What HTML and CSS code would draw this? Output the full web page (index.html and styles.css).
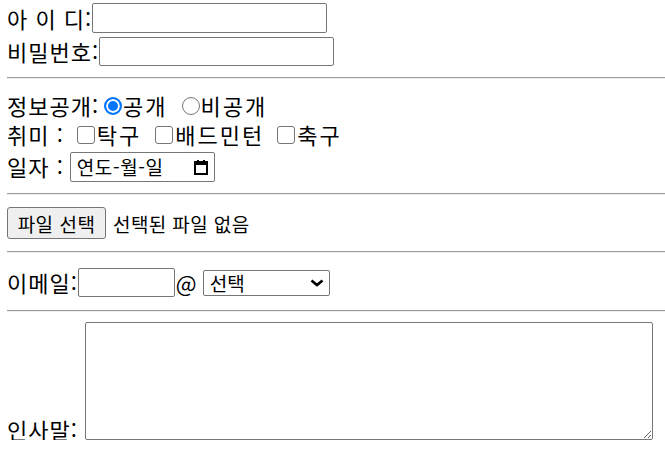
FILE: index.html
```html
<!DOCTYPE html>
<html lang="ko">
<head>
    <meta charset="UTF-8">
    <title>회원가입 폼</title>
    <link rel="stylesheet" href="styles.css">
</head>
<body>
    <!-- 회원정보 입력 폼 -->
    <form class="join">
        <div class="row r1">아 이 디:<input type="text" class="txt"></div>
        <div class="row r2">비밀번호:<input type="password" class="txt"></div>
        <hr class="h1">
        <div class="row chk rad">정보공개:<label><input type="radio" name="open" checked>공개</label><label><input type="radio" name="open">비공개</label></div>
        <div class="row chk box">취미 :<label><input type="checkbox">탁구</label><label><input type="checkbox">배드민턴</label><label class="last"><input type="checkbox">축구</label></div>
        <div class="row r3">일자 :
            <!-- 날짜 입력 (한글 표기) -->
            <span class="date">연도-월-일
                <svg class="cal" width="16" height="16" viewBox="0 0 16 16"><rect x="2" y="3" width="12" height="12" fill="none" stroke="#000" stroke-width="2"/><rect x="2" y="3" width="12" height="3" fill="#000"/><rect x="4" y="1" width="2" height="3" fill="#000"/><rect x="10" y="1" width="2" height="3" fill="#000"/></svg>
            </span>
        </div>
        <hr class="h2">
        <div class="row r4"><button type="button" class="file">파일 선택</button><span class="none">선택된 파일 없음</span></div>
        <hr class="h3">
        <div class="row r5">이메일:<input type="text" class="mail">@
            <span class="selbox">
                <select class="sel"><option>선택</option><option>naver.com</option><option>daum.net</option></select>
                <svg class="arr" width="14" height="8" viewBox="0 0 14 8"><path d="M1.5 1.5 L7 6 L12.5 1.5" fill="none" stroke="#000" stroke-width="2.6"/></svg>
            </span>
        </div>
        <hr class="h4">
        <div class="row msg"><span class="lb">인사말:</span><textarea class="area"></textarea></div>
    </form>
</body>
</html>
```

FILE: styles.css
```css
body{
    margin: 0;
    padding: 3px 0 0 7px;
    font-family: "Noto Sans CJK KR", "Noto Sans", sans-serif;
    font-size: 22px;
    letter-spacing: 1px;
    color: #000;
    overflow: hidden;
}
.row{
    display: flex;
    align-items: center;
    white-space: nowrap;
    line-height: 29px;
}
.r1{ height: 30px; }
.r2{ height: 30px; margin-top: 3px; }
.chk{ height: 29px; }
.r3{ height: 29px; margin-top: 3px; }
.r4{ height: 32px; margin-top: 12px; }
.r5{ height: 29px; margin-top: 15px; }
.msg{ height: 117px; margin-top: 11px; align-items: flex-end; }

hr{
    margin: 0;
    border: 0;
    border-top: 1px solid #9a9a9a;
    border-bottom: 1px solid #eee;
}
.h1{ margin-top: 11px; margin-bottom: 12px; }
.h2{ margin-top: 12px; }
.h3{ margin-top: 12px; }
.h4{ margin-top: 13px; }

input, select, textarea, button{
    font-family: "Noto Sans CJK KR", sans-serif;
    letter-spacing: 0;
}
.txt, .mail{
    box-sizing: border-box;
    height: 30px;
    border: 1px solid #767676;
    border-radius: 2px;
    margin: 0;
}
.txt{ width: 235px; }
.r2 .txt{ height: 29px; }
.mail{ width: 97px; height: 29px; margin-right: 1px; }

/* 라디오 / 체크박스 - 직접 그림 */
label{
    display: flex;
    align-items: center;
    letter-spacing: 2px;
}
input[type=radio], input[type=checkbox]{
    -webkit-appearance: none;
    appearance: none;
    box-sizing: border-box;
    flex: none;
    width: 18px;
    height: 18px;
    margin: 0 1px 0 5px;
    border: 1px solid #767676;
    background: #fff;
}
input[type=radio]{ border-radius: 50%; }
input[type=radio]:checked{
    border: 2px solid #0075ff;
    background: #0075ff;
    box-shadow: inset 0 0 0 2px #fff;
}
input[type=checkbox]{
    border-radius: 3px;
}
.rad label + label input{ margin-left: 14px; }
.box input{ margin: 0 2px 0 13px; }
.box label + label input{ margin-left: 14px; }
.box .last input{ margin-left: 13px; }

.date{
    box-sizing: border-box;
    display: flex;
    align-items: center;
    width: 145px;
    height: 30px;
    margin-left: 6px;
    padding: 0 5px 0 6px;
    border: 1px solid #767676;
    border-radius: 2px;
    font-size: 19px;
    letter-spacing: 0.6px;
}
.cal{ margin-left: auto; }

.file{
    box-sizing: border-box;
    width: 99px;
    height: 32px;
    margin: 0;
    padding: 0;
    font-size: 19px;
    letter-spacing: 0.5px;
    background: #efefef;
    border: 1px solid #767676;
    border-radius: 3px;
    color: #000;
}
.none{
    margin-left: 7px;
    font-size: 19px;
    letter-spacing: 0.4px;
}

/* 이메일 선택 박스 */
.selbox{
    position: relative;
    display: flex;
    margin-left: 5px;
}
.sel{
    box-sizing: border-box;
    -webkit-appearance: none;
    appearance: none;
    width: 127px;
    height: 26px;
    margin: 0;
    padding: 0 0 0 6px;
    font-size: 19px;
    line-height: 22px;
    border: 1px solid #767676;
    border-radius: 2px;
    background: #fff;
    color: #000;
}
.arr{
    position: absolute;
    right: 6px;
    top: 9px;
    pointer-events: none;
}

.lb{ line-height: 22px; }
.area{
    box-sizing: border-box;
    width: 568px;
    height: 118px;
    margin: 0 0 0 7px;
    border: 1px solid #767676;
    border-radius: 2px;
    resize: both;
}
```
